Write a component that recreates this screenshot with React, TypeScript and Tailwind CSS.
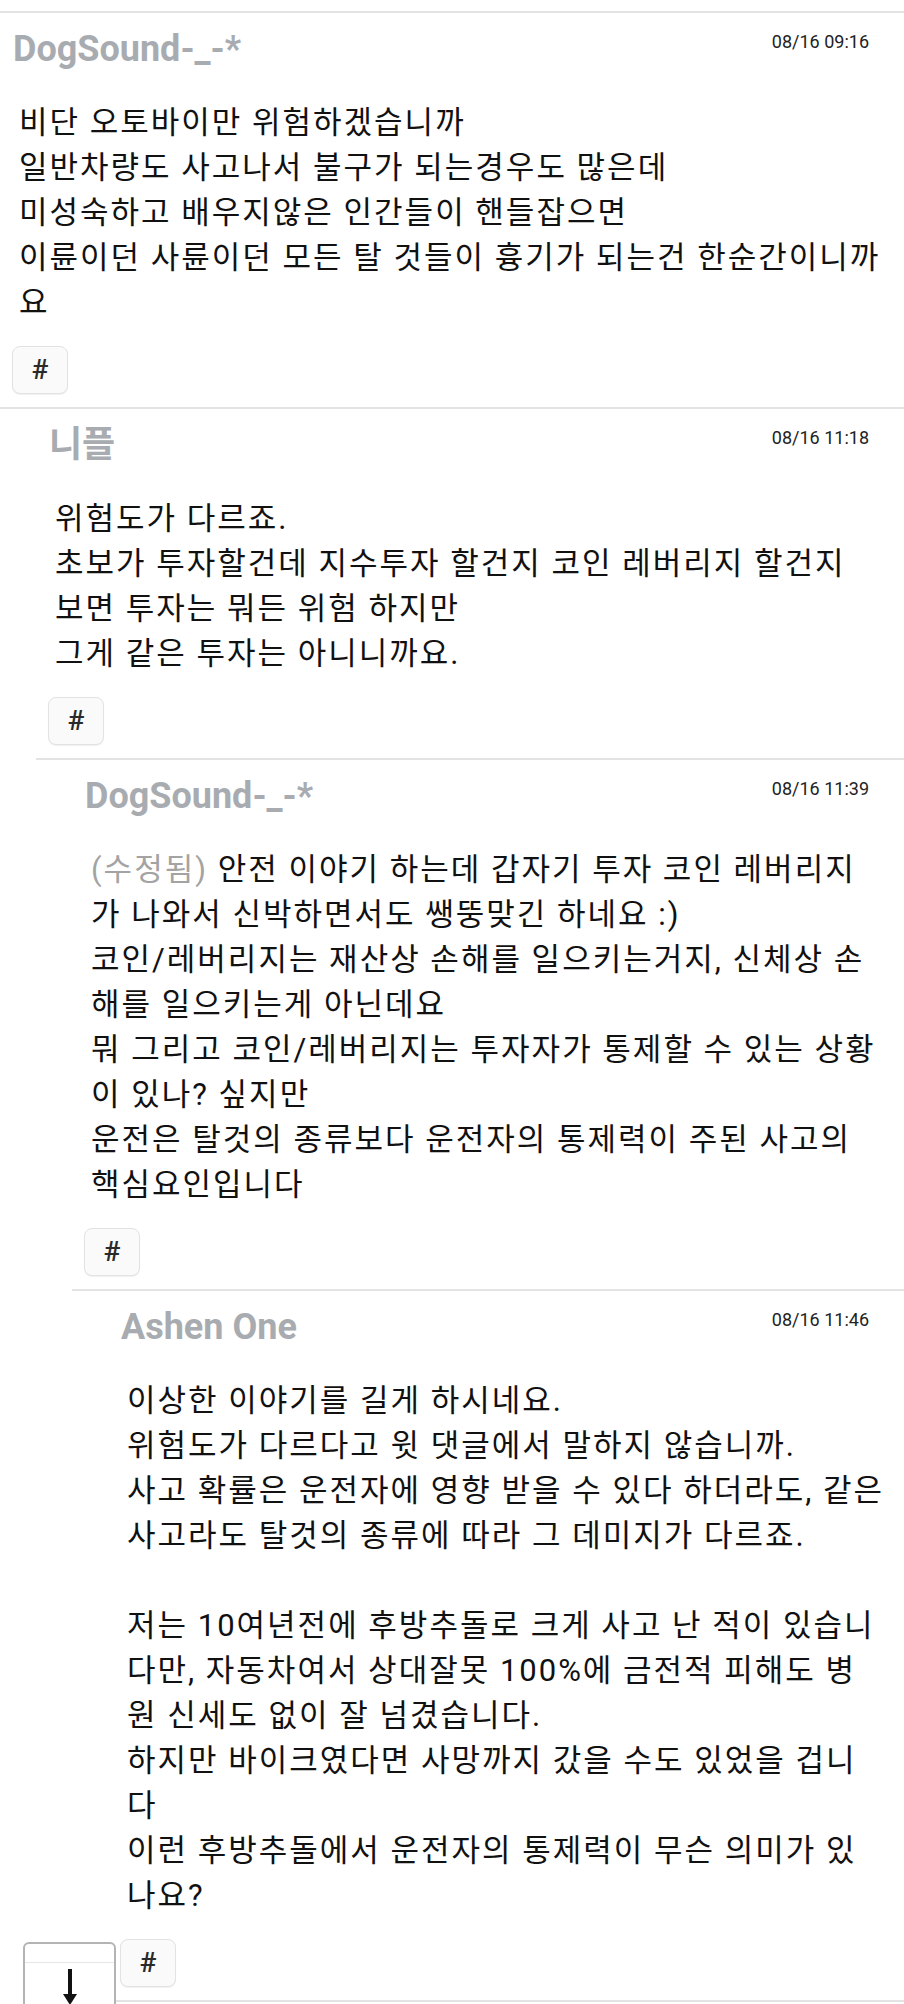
import React from "react";

type CommentData = {
  depth: number;
  name: string;
  time: string;
  edited?: boolean;
  lines: string[];
};

const comments: CommentData[] = [
  {
    depth: 0,
    name: "DogSound-_-*",
    time: "08/16 09:16",
    lines: [
      "비단 오토바이만 위험하겠습니까",
      "일반차량도 사고나서 불구가 되는경우도 많은데",
      "미성숙하고 배우지않은 인간들이 핸들잡으면",
      "이륜이던 사륜이던 모든 탈 것들이 흉기가 되는건 한순간이니까",
      "요",
    ],
  },
  {
    depth: 1,
    name: "니플",
    time: "08/16 11:18",
    lines: [
      "위험도가 다르죠.",
      "초보가 투자할건데 지수투자 할건지 코인 레버리지 할건지",
      "보면 투자는 뭐든 위험 하지만",
      "그게 같은 투자는 아니니까요.",
    ],
  },
  {
    depth: 2,
    name: "DogSound-_-*",
    time: "08/16 11:39",
    edited: true,
    lines: [
      "안전 이야기 하는데 갑자기 투자 코인 레버리지",
      "가 나와서 신박하면서도 쌩뚱맞긴 하네요 :)",
      "코인/레버리지는 재산상 손해를 일으키는거지, 신체상 손",
      "해를 일으키는게 아닌데요",
      "뭐 그리고 코인/레버리지는 투자자가 통제할 수 있는 상황",
      "이 있나? 싶지만",
      "운전은 탈것의 종류보다 운전자의 통제력이 주된 사고의",
      "핵심요인입니다",
    ],
  },
  {
    depth: 3,
    name: "Ashen One",
    time: "08/16 11:46",
    lines: [
      "이상한 이야기를 길게 하시네요.",
      "위험도가 다르다고 윗 댓글에서 말하지 않습니까.",
      "사고 확률은 운전자에 영향 받을 수 있다 하더라도, 같은",
      "사고라도 탈것의 종류에 따라 그 데미지가 다르죠.",
      "",
      "저는 10여년전에 후방추돌로 크게 사고 난 적이 있습니",
      "다만, 자동차여서 상대잘못 100%에 금전적 피해도 병",
      "원 신세도 없이 잘 넘겼습니다.",
      "하지만 바이크였다면 사망까지 갔을 수도 있었을 겁니",
      "다",
      "이런 후방추돌에서 운전자의 통제력이 무슨 의미가 있",
      "나요?",
    ],
  },
];

const indent = ["ml-0", "ml-[36px]", "ml-[72px]", "ml-[108px]"];

function Comment({ c }: { c: CommentData }) {
  return (
    <div className={`${indent[c.depth]} border-b-2 border-[#e3e3e3]`}>
      {/* header */}
      <div className="flex items-start justify-between pl-[13px] pr-[35px] pt-[15px]">
        <span className="text-[36px] leading-[43px] font-bold text-[#a8acb1]">{c.name}</span>
        <span className="mt-[5px] text-[18px] leading-[18px] text-[#222]">{c.time}</span>
      </div>

      {/* body */}
      <div className="pl-[19px] pt-[29px] text-[31px] leading-[45px] tracking-[2px] text-[#111]">
        {c.lines.map((line, i) => (
          <div key={i} className="h-[45px] whitespace-pre">
            {i === 0 && c.edited && <span className="text-[#a3a3a3]">(수정됨) </span>}
            {line}
          </div>
        ))}
      </div>

      {/* anchor button */}
      <div className="pl-[12px] pt-[21px] pb-[13px]">
        <button className="flex h-[48px] w-[56px] items-center justify-center rounded-lg border border-[#e2e2e2] bg-[#fafafa] text-[28px] font-medium leading-none text-[#2a2a2a] shadow-[0_1px_1px_rgba(0,0,0,0.06)]">
          #
        </button>
      </div>
    </div>
  );
}

export default function App() {
  return (
    <div className="relative min-h-[2004px] overflow-hidden bg-white font-[Roboto,'Noto_Sans_CJK_KR',sans-serif]">
      {/* tail of the previous comment */}
      <div className="h-[13px] border-b-2 border-[#e3e3e3]" />

      {comments.map((c, i) => (
        <Comment key={i} c={c} />
      ))}

      {/* floating scroll button */}
      <div className="absolute left-[23px] top-[1942px] h-[90px] w-[93px] rounded-t-md border-2 border-[#b4b4b4] bg-white">
        <div className="h-[19px] border-b border-[#e6e6e6]" />
        <div className="flex justify-center pt-[4px]">
          <svg width="20" height="40" viewBox="0 0 20 40">
            <line x1="10" y1="2" x2="10" y2="30" stroke="#111" strokeWidth="4" />
            <polygon points="3,27 17,27 10,38" fill="#111" />
          </svg>
        </div>
      </div>
    </div>
  );
}
